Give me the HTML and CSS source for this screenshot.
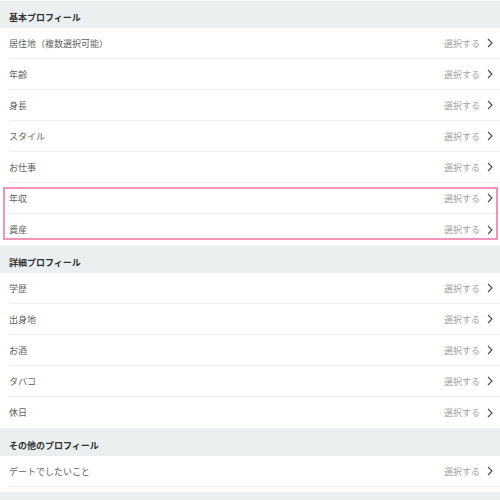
FILE: index.html
```html
<!DOCTYPE html>
<html lang="ja">
<head>
    <meta charset="UTF-8">
    <meta name="viewport" content="width=device-width, initial-scale=1.0">
    <title>プロフィール編集</title>
    <link rel="stylesheet" href="styles.css">
</head>

<body>
    <section class="profile-section">
        <h2 class="section-title">基本プロフィール</h2>
        <div class="row-list">
            <a class="row"><span class="label">居住地（複数選択可能）</span><span class="value">選択する</span><svg class="chevron" viewBox="0 0 6 10"><polyline points="1,1 5,5 1,9"/></svg></a>
            <a class="row"><span class="label">年齢</span><span class="value">選択する</span><svg class="chevron" viewBox="0 0 6 10"><polyline points="1,1 5,5 1,9"/></svg></a>
            <a class="row"><span class="label">身長</span><span class="value">選択する</span><svg class="chevron" viewBox="0 0 6 10"><polyline points="1,1 5,5 1,9"/></svg></a>
            <a class="row"><span class="label">スタイル</span><span class="value">選択する</span><svg class="chevron" viewBox="0 0 6 10"><polyline points="1,1 5,5 1,9"/></svg></a>
            <a class="row"><span class="label">お仕事</span><span class="value">選択する</span><svg class="chevron" viewBox="0 0 6 10"><polyline points="1,1 5,5 1,9"/></svg></a>
            <div class="highlight">
                <a class="row"><span class="label">年収</span><span class="value">選択する</span><svg class="chevron" viewBox="0 0 6 10"><polyline points="1,1 5,5 1,9"/></svg></a>
                <a class="row"><span class="label">資産</span><span class="value">選択する</span><svg class="chevron" viewBox="0 0 6 10"><polyline points="1,1 5,5 1,9"/></svg></a>
            </div>
        </div>
    </section>

    <section class="profile-section">
        <h2 class="section-title">詳細プロフィール</h2>
        <div class="row-list">
            <a class="row"><span class="label">学歴</span><span class="value">選択する</span><svg class="chevron" viewBox="0 0 6 10"><polyline points="1,1 5,5 1,9"/></svg></a>
            <a class="row"><span class="label">出身地</span><span class="value">選択する</span><svg class="chevron" viewBox="0 0 6 10"><polyline points="1,1 5,5 1,9"/></svg></a>
            <a class="row"><span class="label">お酒</span><span class="value">選択する</span><svg class="chevron" viewBox="0 0 6 10"><polyline points="1,1 5,5 1,9"/></svg></a>
            <a class="row"><span class="label">タバコ</span><span class="value">選択する</span><svg class="chevron" viewBox="0 0 6 10"><polyline points="1,1 5,5 1,9"/></svg></a>
            <a class="row"><span class="label">休日</span><span class="value">選択する</span><svg class="chevron" viewBox="0 0 6 10"><polyline points="1,1 5,5 1,9"/></svg></a>
        </div>
    </section>

    <section class="profile-section">
        <h2 class="section-title">その他のプロフィール</h2>
        <div class="row-list open">
            <a class="row"><span class="label">デートでしたいこと</span><span class="value">選択する</span><svg class="chevron" viewBox="0 0 6 10"><polyline points="1,1 5,5 1,9"/></svg></a>
        </div>
    </section>

    <div class="page-end"></div>
</body>
</html>
```

FILE: styles.css
```css
body {
    font-family: "Noto Sans CJK JP", "Noto Sans", sans-serif;
    background-color: #ffffff;
    color: #555555;
    margin: 0;
    padding: 0;
}

.section-title {
    margin: 0;
    height: 28px;
    box-sizing: border-box;
    padding: 12px 9px 0;
    background: #eceff0;
    border-top: 1px solid #f4f6f7;
    font-size: 9px;
    line-height: 10px;
    font-weight: bold;
    color: #333333;
}

.row-list {
    background: #ffffff;
}

.row {
    display: flex;
    align-items: center;
    height: 31px;
    box-sizing: border-box;
    margin-left: 9px;
    padding-right: 7px;
    border-bottom: 1px solid #eeeeee;
    text-decoration: none;
    font-size: 9px;
}

.row-list > .row:last-child,
.highlight .row:last-child {
    border-bottom: none;
}

.row-list.open {
    padding-bottom: 5px;
}

.row-list.open > .row:last-child {
    border-bottom: 1px solid #eeeeee;
}

.label {
    flex: 1;
    color: #5f5f5f;
}

.value {
    color: #a3a3a3;
    margin-right: 7px;
}

.chevron {
    width: 6px;
    height: 10px;
    fill: none;
    stroke: #4a4a4a;
    stroke-width: 1.1;
}

.highlight {
    position: relative;
}

/* marco rosa sobre ingresos y patrimonio */
.highlight::after {
    content: "";
    position: absolute;
    top: 4px;
    bottom: 5px;
    left: 3px;
    right: 2px;
    border: 2px solid #f393b8;
    pointer-events: none;
}

.page-end {
    height: 20px;
    background: #eceff0;
}
```
